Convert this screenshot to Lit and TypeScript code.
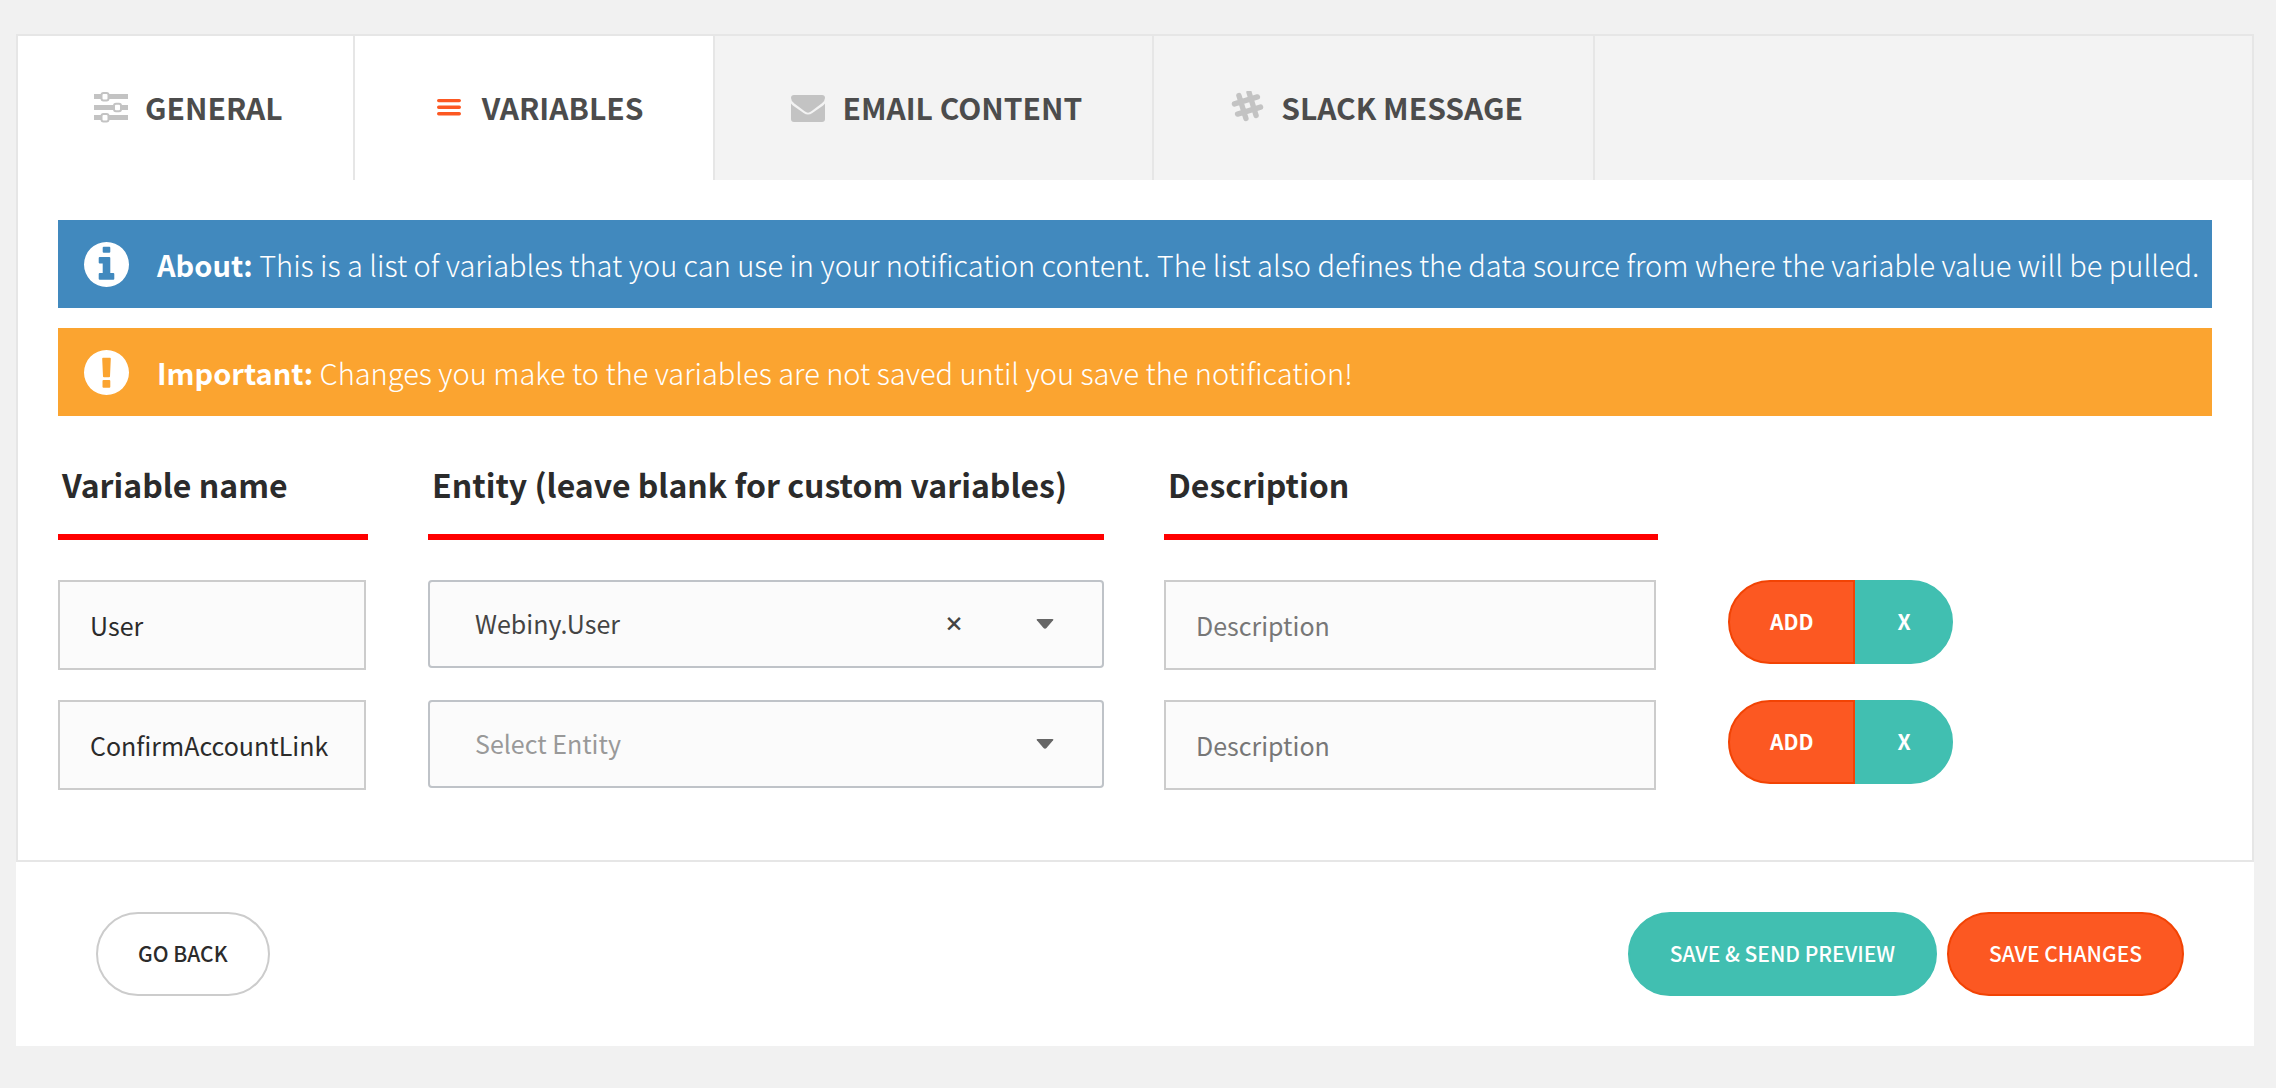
import { LitElement, html, css, svg, nothing } from "lit";
import type { TemplateResult } from "lit";
import { customElement, state } from "lit/decorators.js";
import { classMap } from "lit/directives/class-map.js";

/* Tab icons, all on a 34 x 32 box */
const slidersIcon = svg`
  <path fill="currentColor" d="M0 3h34v5H0zM0 14h34v5H0zM0 24h34v5H0z"/>
  <g fill="#fff" stroke="currentColor" stroke-width="2">
    <rect x="7.5" y="2" width="7" height="7.5" rx="2"/>
    <rect x="20" y="12.7" width="7" height="7.5" rx="2"/>
    <rect x="7.5" y="23" width="7" height="7.5" rx="2"/>
  </g>`;
const listIcon = svg`
  <path stroke="currentColor" stroke-width="3.4" stroke-linecap="round" d="M7.7 9.6h20.6M7.7 16.3h20.6M7.7 22.8h20.6"/>`;
const envelopeIcon = svg`
  <path fill="currentColor" d="M3 4h28q3 0 3 3 0 3-3.4 5.6L20 20.6q-3 2.2-6 0L3.4 12.6Q0 10 0 7q0-3 3-3z"/>
  <path fill="currentColor" d="M0 12.6q1 1.2 2.2 2.1L12.6 22q4.4 3 8.8 0l10.4-7.3q1.2-.9 2.2-2.1V28q0 3-3 3H3q-3 0-3-3z"/>`;
const hashIcon = svg`
  <g transform="rotate(-17 17.5 14.5)" stroke="currentColor" stroke-width="5.4" stroke-linecap="round">
    <path d="M12.2 2.5v24M22.8 2.5v24M5.5 9.2h24M5.5 19.8h24"/>
  </g>`;

/* Alert icons, on a 45 x 45 box; the sign is cut out of the disc */
const DISC = "M22.5 0a22.5 22.5 0 1 1 0 45a22.5 22.5 0 1 1 0-45z";
const infoIcon = svg`
  <path fill="currentColor" fill-rule="evenodd"
    d="${DISC}M19.7 4.7h5.6q1 0 1 1v4q0 1-1 1h-5.6q-1 0-1-1v-4q0-1 1-1z
      M15.7 15h9.6q1 0 1 1v15h3q1 0 1 1v4.7q0 1-1 1H15.7q-1 0-1-1V32q0-1 1-1h3V21.5h-3q-1 0-1-1V16q0-1 1-1z"/>`;
const warnIcon = svg`
  <path fill="currentColor" fill-rule="evenodd"
    d="${DISC}M19 7.7h7q.8 0 .8 1L26 26.5q0 .8-1 .8h-5q-1 0-1-.8L18.2 8.7q0-1 .8-1z
      M19.5 30h5.8q1 0 1 1v5.7q0 1-1 1h-5.8q-1 0-1-1V31q0-1 1-1z"/>`;

interface Tab {
  label: string;
  icon: TemplateResult<2>;
  open?: boolean;
}

interface VariableRow {
  name: string;
  entity: string;
  description: string;
}

const TABS: Tab[] = [
  { label: "GENERAL", icon: slidersIcon, open: true },
  { label: "VARIABLES", icon: listIcon, open: true },
  { label: "EMAIL CONTENT", icon: envelopeIcon },
  { label: "SLACK MESSAGE", icon: hashIcon },
];

@customElement("app-root")
export class AppRoot extends LitElement {
  @state() private selected = 1;
  @state() private rows: VariableRow[] = [
    { name: "User", entity: "Webiny.User", description: "" },
    { name: "ConfirmAccountLink", entity: "", description: "" },
  ];

  static styles = css`
    :host {
      display: block;
      min-height: 100vh;
      box-sizing: border-box;
      padding: 34px 22px 40px 16px;
      background: #f1f1f1;
      color: #2b2b2b;
      font-family: "Noto Sans CJK SC", "Source Sans Pro", sans-serif;
      font-size: 25px;
    }
    * {
      box-sizing: border-box;
    }
    button,
    input,
    select {
      font: inherit;
      margin: 0;
    }
    button {
      cursor: pointer;
    }
    .panel {
      background: #fff;
      border: 2px solid #e6e6e6;
    }

    .tabs {
      display: flex;
      background: #f3f3f3;
    }
    .tab {
      display: flex;
      align-items: center;
      gap: 17px;
      height: 144px;
      padding: 0 70px 2px 76px;
      border: 0;
      border-right: 2px solid #e6e6e6;
      background: none;
      color: #4c4c4c;
      font-size: 30px;
      font-weight: 700;
      white-space: nowrap;
    }
    .tab.open {
      background: #fff;
    }
    .tab-icon {
      width: 34px;
      height: 32px;
      flex: none;
      color: #c3c3c3;
      fill: none;
    }
    .tab.selected .tab-icon {
      color: #fc5822;
    }

    .content {
      padding: 40px 40px 70px;
    }
    .alert {
      display: flex;
      align-items: center;
      gap: 28px;
      min-height: 88px;
      margin-bottom: 20px;
      padding: 0 8px 0 26px;
      color: #fff;
      font-size: 29px;
      font-weight: 300;
      line-height: 40px;
    }
    .alert p {
      margin: 0;
    }
    .alert strong {
      font-weight: 700;
    }
    .alert-icon {
      width: 45px;
      height: 45px;
      flex: none;
    }
    .info {
      background: #4189be;
    }
    .warning {
      background: #fba430;
    }

    table,
    thead,
    tbody {
      display: block;
    }
    table {
      margin-top: 48px;
    }
    tr {
      display: grid;
      grid-template-columns: 310fr 676fr 494fr 494fr;
      column-gap: 60px;
    }
    th,
    td {
      display: block;
      min-width: 0;
      padding: 0;
    }
    th {
      padding: 0 4px 30px;
      border-bottom: 6px solid #f00;
      font-size: 32px;
      font-weight: 700;
      line-height: 40px;
      text-align: left;
      white-space: nowrap;
    }
    tbody {
      display: grid;
      gap: 30px;
      margin-top: 40px;
    }
    .text {
      display: block;
      width: calc(100% - 2px);
      height: 90px;
      padding: 0 30px;
      border: 2px solid #ccc;
      border-radius: 0;
      background: #fbfbfb;
      color: #2b2b2b;
    }
    .text::placeholder {
      color: #777;
      opacity: 1;
    }
    .picker {
      display: grid;
      align-items: center;
    }
    .picker > * {
      grid-area: 1 / 1;
    }
    .select {
      appearance: none;
      width: 100%;
      height: 88px;
      padding: 0 160px 2px 45px;
      border: 2px solid #bfc3c8;
      border-radius: 4px;
      background: #fbfbfb;
      color: #444;
    }
    .select.empty {
      color: #999;
    }
    .tools {
      justify-self: end;
      display: flex;
      align-items: center;
      gap: 66px;
      padding-right: 50px;
      pointer-events: none;
    }
    .clear {
      width: 32px;
      height: 32px;
      padding: 0;
      border: 0;
      background: none;
      color: #444;
      font-size: 20px;
      font-weight: 900;
      line-height: 32px;
      pointer-events: auto;
    }
    .arrow {
      width: 18px;
      height: 10px;
      fill: #666;
    }

    .actions {
      display: flex;
      padding-left: 10px;
    }
    .btn {
      height: 84px;
      padding: 0 40px 2px;
      border: 2px solid #ccc;
      border-radius: 42px;
      background: #fff;
      color: #2b2b2b;
      font-size: 21px;
      white-space: nowrap;
    }
    .primary {
      background: #fc5822;
      border-color: #f24304;
      color: #fff;
      font-weight: 500;
    }
    .secondary {
      background: #41bfb1;
      border-color: #41bfb1;
      color: #fff;
      font-weight: 500;
    }
    .actions .btn {
      font-weight: 700;
    }
    .actions .primary {
      border-radius: 42px 0 0 42px;
    }
    .actions .secondary {
      border-radius: 0 42px 42px 0;
    }

    .footer {
      display: flex;
      gap: 10px;
      padding: 50px 70px 50px 80px;
      background: #fff;
    }
    .back {
      margin-right: auto;
      font-weight: 500;
    }
  `;

  private edit(index: number, change: Partial<VariableRow>) {
    this.rows = this.rows.map((row, i) => (i === index ? { ...row, ...change } : row));
  }

  private add(index: number) {
    const blank = { name: "", entity: "", description: "" };
    this.rows = [...this.rows.slice(0, index + 1), blank, ...this.rows.slice(index + 1)];
  }

  private remove(index: number) {
    this.rows = this.rows.filter((_, i) => i !== index);
  }

  private renderRow(row: VariableRow, i: number) {
    return html`
      <tr>
        <td>
          <input
            class="text"
            type="text"
            aria-label="Variable name"
            .value=${row.name}
            @input=${(e: Event) => this.edit(i, { name: (e.target as HTMLInputElement).value })}
          />
        </td>
        <td>
          <div class="picker">
            <select
              class=${classMap({ select: true, empty: !row.entity })}
              aria-label="Entity"
              @change=${(e: Event) => this.edit(i, { entity: (e.target as HTMLSelectElement).value })}
            >
              <option value="" ?selected=${!row.entity}>Select Entity</option>
              <option value="Webiny.User" ?selected=${row.entity === "Webiny.User"}>Webiny.User</option>
            </select>
            <div class="tools">
              ${row.entity
                ? html`<button class="clear" type="button" aria-label="Clear entity"
                    @click=${() => this.edit(i, { entity: "" })}>×</button>`
                : nothing}
              <svg class="arrow" viewBox="0 0 18 10" aria-hidden="true">
                <path d="M1.5 0h15q1.5 0 .6 1.2L10.5 9q-1.5 1.5-3 0L.9 1.2Q0 0 1.5 0z" />
              </svg>
            </div>
          </div>
        </td>
        <td>
          <input
            class="text"
            type="text"
            aria-label="Description"
            placeholder="Description"
            .value=${row.description}
            @input=${(e: Event) => this.edit(i, { description: (e.target as HTMLInputElement).value })}
          />
        </td>
        <td class="actions">
          <button class="btn primary" type="button" @click=${() => this.add(i)}>ADD</button>
          <button class="btn secondary" type="button" @click=${() => this.remove(i)}>X</button>
        </td>
      </tr>
    `;
  }

  render() {
    return html`
      <section class="panel">
        <div class="tabs" role="tablist">
          ${TABS.map(
            (tab, i) => html`
              <button
                class=${classMap({ tab: true, open: !!tab.open, selected: i === this.selected })}
                type="button"
                role="tab"
                aria-selected=${i === this.selected}
                @click=${() => (this.selected = i)}
              >
                <svg class="tab-icon" viewBox="0 0 34 32" aria-hidden="true">${tab.icon}</svg>
                <span>${tab.label}</span>
              </button>
            `
          )}
        </div>
        <div class="content">
          <div class="alert info">
            <svg class="alert-icon" viewBox="0 0 45 45" aria-hidden="true">${infoIcon}</svg>
            <p><strong>About:</strong> This is a list of variables that you can use in your notification content. The list also defines the data source from where the variable value will be pulled.</p>
          </div>
          <div class="alert warning">
            <svg class="alert-icon" viewBox="0 0 45 45" aria-hidden="true">${warnIcon}</svg>
            <p><strong>Important:</strong> Changes you make to the variables are not saved until you save the notification!</p>
          </div>
          <table>
            <thead>
              <tr>
                <th scope="col">Variable name</th>
                <th scope="col">Entity (leave blank for custom variables)</th>
                <th scope="col">Description</th>
              </tr>
            </thead>
            <tbody>
              ${this.rows.map((row, i) => this.renderRow(row, i))}
            </tbody>
          </table>
        </div>
      </section>
      <footer class="footer">
        <button class="btn back" type="button">GO BACK</button>
        <button class="btn secondary" type="button">SAVE &amp; SEND PREVIEW</button>
        <button class="btn primary" type="button">SAVE CHANGES</button>
      </footer>
    `;
  }
}
